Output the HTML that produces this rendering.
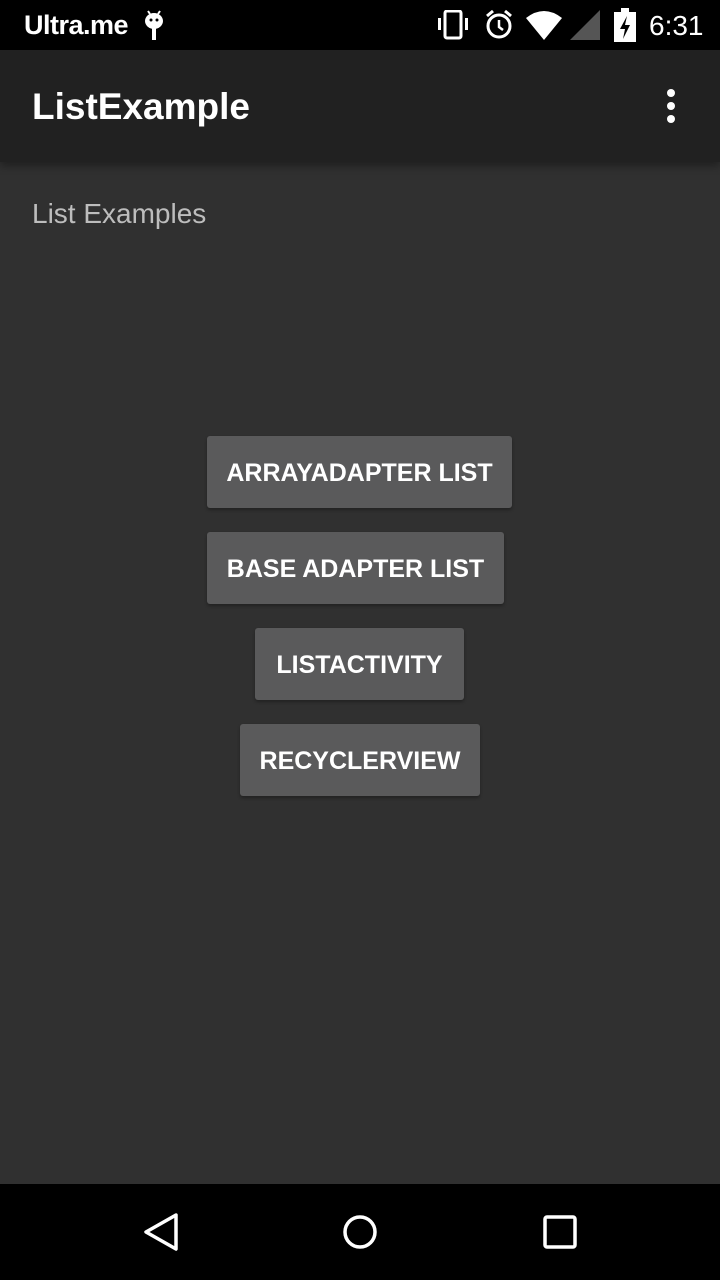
<!DOCTYPE html>
<html><head><style>
body{margin:0;width:720px;height:1280px;background:#303030;font-family:"Liberation Sans",sans-serif;position:relative;overflow:hidden}
.sb{position:absolute;top:0;left:0;width:720px;height:50px;background:#000;color:#fff}
.tb{position:absolute;top:50px;left:0;width:720px;height:112px;background:#212121;box-shadow:0 4px 8px rgba(0,0,0,.35)}
.btn{position:absolute;height:72px;background:#5a5a5b;border-radius:3px;color:#fff;font-size:25px;font-weight:bold;line-height:74px;text-align:center;box-shadow:0 2px 3px rgba(0,0,0,.3)}
.nav{position:absolute;top:1184px;left:0;width:720px;height:96px;background:#000}
</style></head><body>
<div class="sb">
<div style="position:absolute;left:24px;top:10px;font-size:27px;font-weight:bold;letter-spacing:-0.5px">Ultra.me</div>
<svg style="position:absolute;left:142px;top:8px" width="24" height="34"><ellipse cx="12" cy="13" rx="9" ry="8" fill="#fff"/><rect x="10" y="20" width="4" height="12" fill="#fff"/><circle cx="9" cy="12" r="1.5" fill="#000"/><circle cx="15" cy="12" r="1.5" fill="#000"/><line x1="6" y1="3" x2="8" y2="6" stroke="#fff" stroke-width="2"/><line x1="18" y1="3" x2="16" y2="6" stroke="#fff" stroke-width="2"/></svg>
<svg style="position:absolute;left:435px;top:10px" width="40" height="30"><rect x="10" y="1" width="16" height="27" rx="2" fill="none" stroke="#fff" stroke-width="3"/><rect x="3" y="8" width="3" height="12" fill="#fff"/><rect x="30" y="8" width="3" height="12" fill="#fff"/></svg>
<svg style="position:absolute;left:484px;top:9px" width="32" height="32"><circle cx="15" cy="17" r="11" fill="none" stroke="#fff" stroke-width="3"/><path d="M15 11v7l4 3" stroke="#fff" stroke-width="2.5" fill="none"/><path d="M3 7l6-5M27 7l-6-5" stroke="#fff" stroke-width="3"/></svg>
<svg style="position:absolute;left:526px;top:10px" width="38" height="30"><path d="M0 8Q18-6 36 8L18 30Z" fill="#fff"/></svg>
<svg style="position:absolute;left:570px;top:10px" width="30" height="30"><path d="M0 30L30 0V30Z" fill="#555"/></svg>
<svg style="position:absolute;left:614px;top:8px" width="22" height="34"><rect x="0" y="4" width="22" height="30" fill="#fff"/><rect x="7" y="0" width="8" height="5" fill="#fff"/><path d="M13 8l-7 13h5l-2 10 7-14h-5z" fill="#000"/></svg>
<div style="position:absolute;left:649px;top:10px;font-size:28px">6:31</div>
</div>
<div class="tb">
<div style="position:absolute;left:32px;top:36px;color:#fff;font-size:37px;font-weight:bold">ListExample</div>
<svg style="position:absolute;left:664px;top:38px" width="14" height="36"><circle cx="7" cy="5" r="4" fill="#fff"/><circle cx="7" cy="18" r="4" fill="#fff"/><circle cx="7" cy="31" r="4" fill="#fff"/></svg>
</div>
<div style="position:absolute;left:32px;top:198px;color:#bdbdbd;font-size:28px">List Examples</div>
<div class="btn" style="left:207px;top:436px;width:305px">ARRAYADAPTER LIST</div>
<div class="btn" style="left:207px;top:532px;width:297px">BASE ADAPTER LIST</div>
<div class="btn" style="left:255px;top:628px;width:209px">LISTACTIVITY</div>
<div class="btn" style="left:240px;top:724px;width:240px">RECYCLERVIEW</div>
<div class="nav">
<svg style="position:absolute;left:140px;top:28px" width="40" height="40"><path d="M36 3L6 20L36 37Z" fill="none" stroke="#fff" stroke-width="3.5" stroke-linejoin="round"/></svg>
<svg style="position:absolute;left:340px;top:28px" width="40" height="40"><circle cx="20" cy="20" r="15" fill="none" stroke="#fff" stroke-width="3.5"/></svg>
<svg style="position:absolute;left:540px;top:28px" width="40" height="40"><rect x="5" y="5" width="30" height="30" rx="2" fill="none" stroke="#fff" stroke-width="3.5"/></svg>
</div>
</body></html>
